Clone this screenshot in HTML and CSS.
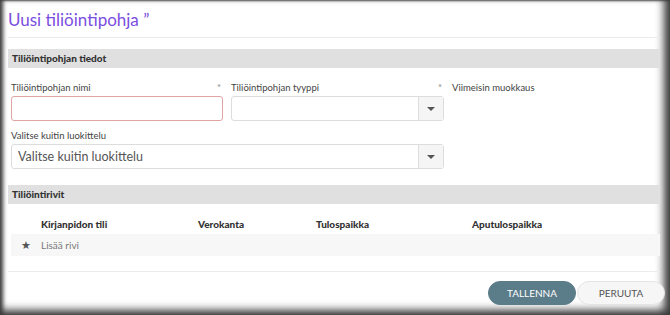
FILE: index.html
```html
<!DOCTYPE html>
<html lang="fi">
<head>
    <meta charset="UTF-8">
    <title>Uusi tiliöintipohja</title>
    <link rel="stylesheet" href="styles.css">
</head>
<body>
    <div class="frame">
        <h1 class="title">Uusi tiliöintipohja ”</h1>

        <!-- Basic info -->
        <div class="section-head">Tiliöintipohjan tiedot</div>
        <div class="fields">
            <div class="field">
                <div class="label-row"><label>Tiliöintipohjan nimi</label><span class="req">*</span></div>
                <input type="text" class="input invalid">
            </div>
            <div class="field">
                <div class="label-row"><label>Tiliöintipohjan tyyppi</label><span class="req">*</span></div>
                <div class="select">
                    <span class="select-text"></span>
                    <span class="select-btn"><span class="caret"></span></span>
                </div>
            </div>
            <div class="field">
                <div class="label-row"><label>Viimeisin muokkaus</label></div>
            </div>
            <div class="field wide">
                <div class="label-row"><label>Valitse kuitin luokittelu</label></div>
                <div class="select">
                    <span class="select-text">Valitse kuitin luokittelu</span>
                    <span class="select-btn"><span class="caret"></span></span>
                </div>
            </div>
        </div>

        <!-- Rows -->
        <div class="section-head">Tiliöintirivit</div>
        <div class="rows">
            <div class="row head">
                <span></span>
                <span>Kirjanpidon tili</span>
                <span>Verokanta</span>
                <span>Tulospaikka</span>
                <span>Aputulospaikka</span>
            </div>
            <div class="row add">
                <span class="star">★</span>
                <span>Lisää rivi</span>
            </div>
        </div>

        <div class="actions">
            <button class="btn primary">TALLENNA</button>
            <button class="btn">PERUUTA</button>
        </div>
    </div>
</body>
</html>
```

FILE: styles.css
```css
body {
    margin: 0;
    padding: 0;
    font-family: "Lato", "Open Sans", sans-serif;
    color: #333333;
    background-color: #ffffff;
}
.frame {
    width: 670px;
    height: 315px;
    box-sizing: border-box;
    padding: 8px 10px 0 8px;
    background-color: #ffffff;
    box-shadow: inset 5px 0 4px -2px #3c3c3c,
                inset -10px 0 8px -4px #3c3c3c,
                inset 0 -9px 8px -4px #3c3c3c,
                inset 0 2px 2px -1px #666666;
}
.title {
    margin: 0;
    font-size: 17px;
    font-weight: 400;
    color: #7b4ee0;
    line-height: 24px;
    padding-bottom: 5px;
    border-bottom: 1px solid #ececec;
    margin-bottom: 11px;
}
.section-head {
    background-color: #e0e0e0;
    height: 19px;
    line-height: 19px;
    padding-left: 4px;
    font-size: 10px;
    font-weight: 900;
    color: #333333;
}
.fields {
    display: grid;
    grid-template-columns: 212px 213px 1fr;
    column-gap: 8px;
    row-gap: 8px;
    padding: 13px 0 16px 3px;
}
.field.wide {
    grid-column: 1 / 3;
}
.label-row {
    display: flex;
    justify-content: space-between;
    font-size: 9.5px;
    color: #444444;
    height: 13px;
    line-height: 13px;
    margin-bottom: 2px;
}
.req {
    color: #888888;
    padding-right: 2px;
}
.input {
    display: block;
    width: 100%;
    height: 25px;
    box-sizing: border-box;
    border: 1px solid #dddddd;
    border-radius: 3px;
    margin: 0;
}
.input.invalid {
    border-color: #e2a3a3;
}
.select {
    display: flex;
    height: 25px;
    box-sizing: border-box;
    border: 1px solid #dddddd;
    border-radius: 3px;
}
.select-text {
    flex: 1;
    font-size: 12.5px;
    line-height: 23px;
    padding-left: 6px;
    color: #555555;
}
.select-btn {
    width: 24px;
    border-left: 1px solid #dddddd;
    background-color: #f5f5f5;
    display: flex;
    align-items: center;
    justify-content: center;
}
.caret {
    width: 0;
    height: 0;
    border-left: 4px solid transparent;
    border-right: 4px solid transparent;
    border-top: 4px solid #555555;
}
.rows {
    padding: 10px 0 15px 3px;
    border-bottom: 1px solid #ececec;
}
.row {
    display: grid;
    grid-template-columns: 30px 157px 118px 156px 1fr;
    align-items: center;
    font-size: 10px;
}
.row.head {
    height: 20px;
    font-weight: 900;
    color: #333333;
}
.row.add {
    height: 22px;
    background-color: #f7f7f7;
    color: #777777;
}
.star {
    text-align: center;
    font-size: 11px;
    color: #555555;
}
.actions {
    display: flex;
    justify-content: flex-end;
    gap: 1px;
    padding-top: 9px;
    margin-right: -5px;
}
.btn {
    width: 88px;
    height: 24px;
    border: 1px solid #e4e4e4;
    border-radius: 12px;
    background-color: #f6f6f6;
    color: #555555;
    font-family: inherit;
    font-size: 10px;
}
.btn.primary {
    background-color: #5b7c89;
    border-color: #5b7c89;
    color: #ffffff;
}
```
